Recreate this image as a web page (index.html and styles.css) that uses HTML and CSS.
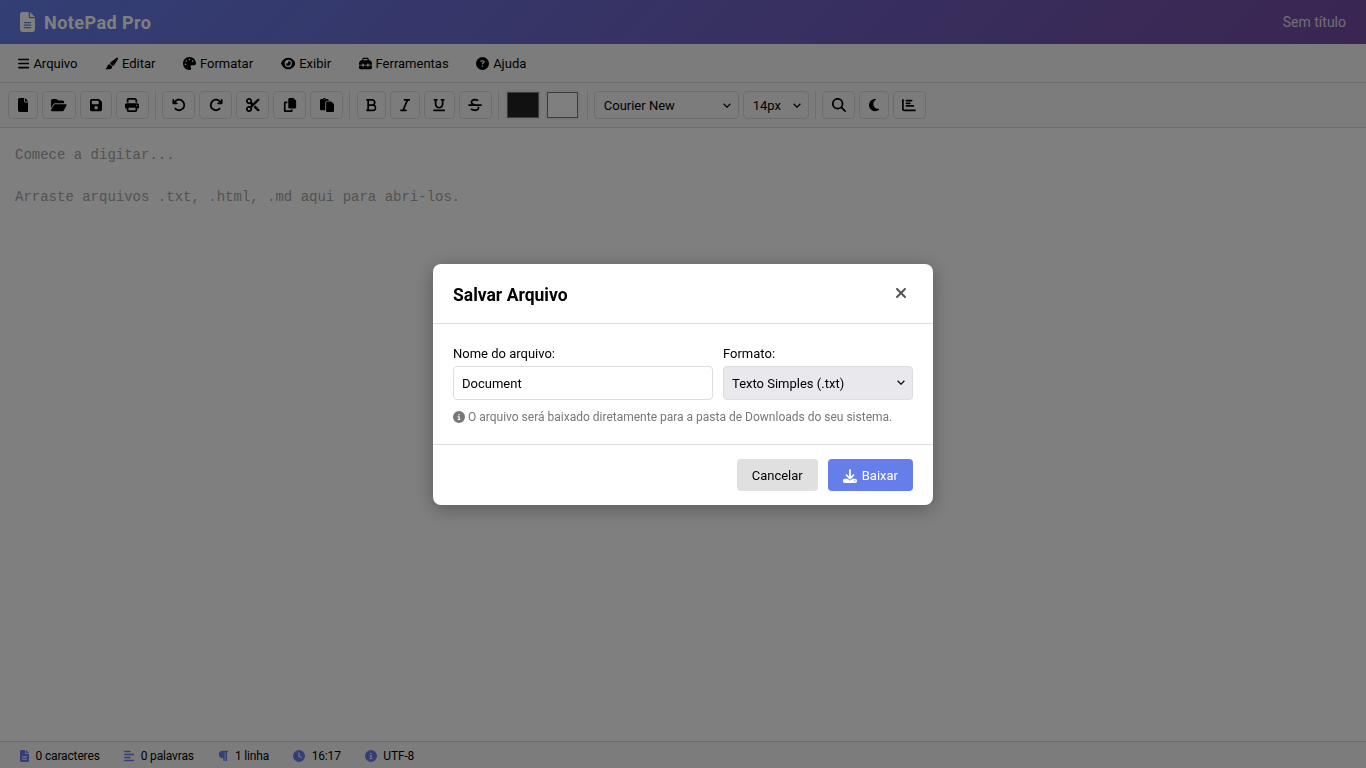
FILE: index.html
```html
<!DOCTYPE html>
<html lang="pt-BR">
<head>
    <meta charset="UTF-8">
    <title>NotePad Pro</title>
    <link rel="stylesheet" href="styles.css">
</head>
<body>
<svg class="sprite" xmlns="http://www.w3.org/2000/svg">
    <symbol id="i-file" viewBox="0 0 384 512"><path d="M0 64C0 28.7 28.7 0 64 0H224V128c0 17.7 14.3 32 32 32H384V448c0 35.3-28.7 64-64 64H64c-35.3 0-64-28.7-64-64V64zm384 64H256V0L384 128z"/></symbol>
    <symbol id="i-file-lines" viewBox="0 0 384 512"><path d="M64 0C28.7 0 0 28.7 0 64V448c0 35.3 28.7 64 64 64H320c35.3 0 64-28.7 64-64V160H256c-17.7 0-32-14.3-32-32V0H64zM256 0V128H384L256 0zM112 256H272c8.8 0 16 7.2 16 16s-7.2 16-16 16H112c-8.8 0-16-7.2-16-16s7.2-16 16-16zm0 64H272c8.8 0 16 7.2 16 16s-7.2 16-16 16H112c-8.8 0-16-7.2-16-16s7.2-16 16-16zm0 64H272c8.8 0 16 7.2 16 16s-7.2 16-16 16H112c-8.8 0-16-7.2-16-16s7.2-16 16-16z"/></symbol>
    <symbol id="i-bars" viewBox="0 0 448 512"><path d="M0 96C0 78.3 14.3 64 32 64H416c17.7 0 32 14.3 32 32s-14.3 32-32 32H32C14.3 128 0 113.7 0 96zM0 256c0-17.7 14.3-32 32-32H416c17.7 0 32 14.3 32 32s-14.3 32-32 32H32c-17.7 0-32-14.3-32-32zM448 416c0 17.7-14.3 32-32 32H32c-17.7 0-32-14.3-32-32s14.3-32 32-32H416c17.7 0 32 14.3 32 32z"/></symbol>
    <symbol id="i-brush" viewBox="0 0 576 512"><path d="M339.3 367.1c27.3-3.9 51.9-19.4 67.2-42.9L568.2 74.1c12.6-19.5 9.4-45.3-7.6-61.2S517.7-4.4 499.1 9.6L262.4 187.2c-24 18-38.2 46.1-38.4 76.1L339.3 367.1zm-19.6 25.4l-116-104.4C143.9 290.3 96 339.6 96 400c0 3.9 .2 7.8 .6 11.6C98.4 429.1 86.4 448 68.8 448H64c-17.7 0-32 14.3-32 32s14.3 32 32 32H208c61.9 0 112-50.1 112-112c0-2.5-.1-5-.2-7.5z"/></symbol>
    <symbol id="i-palette" viewBox="0 0 512 512"><path d="M512 256c0 .9 0 1.8 0 2.7c-.4 36.5-33.6 61.3-70.1 61.3H344c-26.5 0-48 21.5-48 48c0 3.4 .4 6.7 1 9.9c2.1 10.2 6.5 20 10.8 29.9c6.1 13.8 12.1 27.5 12.1 42c0 31.8-21.6 60.7-53.4 62c-3.5 .1-7 .2-10.6 .2C114.6 512 0 397.4 0 256S114.6 0 256 0S512 114.6 512 256zM128 288a32 32 0 1 0 -64 0 32 32 0 1 0 64 0zm0-96a32 32 0 1 0 0-64 32 32 0 1 0 0 64zM288 96a32 32 0 1 0 -64 0 32 32 0 1 0 64 0zm96 96a32 32 0 1 0 0-64 32 32 0 1 0 0 64z"/></symbol>
    <symbol id="i-eye" viewBox="0 0 576 512"><path d="M288 32c-80.8 0-145.5 36.8-192.6 80.6C48.6 156 17.3 208 2.5 243.7c-3.3 7.9-3.3 16.7 0 24.6C17.3 304 48.6 356 95.4 399.4C142.5 443.2 207.2 480 288 480s145.5-36.8 192.6-80.6c46.8-43.5 78.1-95.4 93-131.1c3.3-7.9 3.3-16.7 0-24.6c-14.9-35.7-46.2-87.7-93-131.1C433.5 68.8 368.8 32 288 32zM144 256a144 144 0 1 1 288 0 144 144 0 1 1 -288 0zm144-64c0 35.3-28.7 64-64 64c-7.1 0-13.9-1.2-20.3-3.3c-5.5-1.8-11.9 1.6-11.7 7.4c.3 6.9 1.3 13.8 3.2 20.7c13.7 51.2 66.4 81.6 117.6 67.9s81.6-66.4 67.9-117.6c-11.1-41.5-47.8-69.4-88.6-71.1c-5.8-.2-9.2 6.1-7.4 11.7c2.1 6.4 3.3 13.2 3.3 20.3z"/></symbol>
    <symbol id="i-toolbox" viewBox="0 0 512 512"><path d="M176 88v40H336V88c0-4.4-3.6-8-8-8H184c-4.4 0-8 3.6-8 8zm-48 40V88c0-30.9 25.1-56 56-56H328c30.9 0 56 25.1 56 56v40h28.1c12.7 0 24.9 5.1 33.9 14.1l51.9 51.9c9 9 14.1 21.2 14.1 33.9V304H384V288c0-17.7-14.3-32-32-32s-32 14.3-32 32v16H192V288c0-17.7-14.3-32-32-32s-32 14.3-32 32v16H0V227.9c0-12.7 5.1-24.9 14.1-33.9l51.9-51.9c9-9 21.2-14.1 33.9-14.1H128zM0 416V336H128v16c0 17.7 14.3 32 32 32s32-14.3 32-32V336H320v16c0 17.7 14.3 32 32 32s32-14.3 32-32V336H512v80c0 35.3-28.7 64-64 64H64c-35.3 0-64-28.7-64-64z"/></symbol>
    <symbol id="i-question" viewBox="0 0 512 512"><path d="M256 512A256 256 0 1 0 256 0a256 256 0 1 0 0 512zM169.8 165.3c7.9-22.3 29.1-37.3 52.8-37.3h58.3c34.9 0 63.1 28.3 63.1 63.1c0 22.6-12.1 43.5-31.7 54.8L280 264.4c-.2 13-10.9 23.6-24 23.6c-13.3 0-24-10.7-24-24V250.5c0-8.6 4.6-16.5 12.1-20.8l44.3-25.4c4.7-2.7 7.6-7.7 7.6-13.1c0-8.4-6.8-15.1-15.1-15.1H222.6c-3.4 0-6.4 2.1-7.5 5.3l-.4 1.2c-4.4 12.5-18.2 19-30.6 14.6s-19-18.2-14.6-30.6l.4-1.2zM224 352a32 32 0 1 1 64 0 32 32 0 1 1 -64 0z"/></symbol>
    <symbol id="i-folder" viewBox="0 0 576 512"><path d="M88.7 223.8L0 375.8V96C0 60.7 28.7 32 64 32H181.5c17 0 33.3 6.7 45.3 18.7l26.5 26.5c12 12 28.3 18.7 45.3 18.7H416c35.3 0 64 28.7 64 64v32H144c-22.8 0-43.8 12.1-55.3 31.8zm27.6 16.1C122.1 230 132.6 224 144 224H544c11.5 0 22 6.1 27.7 16.1s5.7 22.2-.1 32.1l-112 192C453.9 474 443.4 480 432 480H32c-11.5 0-22-6.1-27.7-16.1s-5.7-22.2 .1-32.1l112-192z"/></symbol>
    <symbol id="i-save" viewBox="0 0 448 512"><path d="M64 32C28.7 32 0 60.7 0 96V416c0 35.3 28.7 64 64 64H384c35.3 0 64-28.7 64-64V173.3c0-17-6.7-33.3-18.7-45.3L352 50.7C340 38.7 323.7 32 306.7 32H64zm0 96c0-17.7 14.3-32 32-32H288c17.7 0 32 14.3 32 32v64c0 17.7-14.3 32-32 32H96c-17.7 0-32-14.3-32-32V128zM224 288a64 64 0 1 1 0 128 64 64 0 1 1 0-128z"/></symbol>
    <symbol id="i-print" viewBox="0 0 512 512"><path d="M128 0C92.7 0 64 28.7 64 64v96h64V64H354.7L384 93.3V160h64V93.3c0-17-6.7-33.3-18.7-45.3L400 18.7C388 6.7 371.7 0 354.7 0H128zM384 352v32 64H128V384 368 352H384zm64 32h32c17.7 0 32-14.3 32-32V256c0-35.3-28.7-64-64-64H64c-35.3 0-64 28.7-64 64v96c0 17.7 14.3 32 32 32H64v64c0 35.3 28.7 64 64 64H384c35.3 0 64-28.7 64-64V384zM432 248a24 24 0 1 1 0 48 24 24 0 1 1 0-48z"/></symbol>
    <symbol id="i-undo" viewBox="0 0 512 512"><path d="M125.7 160H176c17.7 0 32 14.3 32 32s-14.3 32-32 32H48c-17.7 0-32-14.3-32-32V64c0-17.7 14.3-32 32-32s32 14.3 32 32v51.2L97.6 97.6c87.5-87.5 229.3-87.5 316.8 0s87.5 229.3 0 316.8s-229.3 87.5-316.8 0c-12.5-12.5-12.5-32.8 0-45.3s32.8-12.5 45.3 0c62.5 62.5 163.8 62.5 226.3 0s62.5-163.8 0-226.3s-163.8-62.5-226.3 0L125.7 160z"/></symbol>
    <symbol id="i-redo" viewBox="0 0 512 512"><path d="M386.3 160H336c-17.7 0-32 14.3-32 32s14.3 32 32 32H464c17.7 0 32-14.3 32-32V64c0-17.7-14.3-32-32-32s-32 14.3-32 32v51.2L414.4 97.6c-87.5-87.5-229.3-87.5-316.8 0s-87.5 229.3 0 316.8s229.3 87.5 316.8 0c12.5-12.5 12.5-32.8 0-45.3s-32.8-12.5-45.3 0c-62.5 62.5-163.8 62.5-226.3 0s-62.5-163.8 0-226.3s163.8-62.5 226.3 0L386.3 160z"/></symbol>
    <symbol id="i-cut" viewBox="0 0 512 512"><path d="M256 192l-39.5-39.5c4.9-12.6 7.5-26.2 7.5-40.5C224 50.1 173.9 0 112 0S0 50.1 0 112s50.1 112 112 112c14.3 0 27.9-2.7 40.5-7.5L192 256l-39.5 39.5c-12.6-4.9-26.2-7.5-40.5-7.5C50.1 288 0 338.1 0 400s50.1 112 112 112s112-50.1 112-112c0-14.3-2.7-27.9-7.5-40.5L499.2 76.8c7.1-7.1 7.1-18.5 0-25.6c-28.3-28.3-74.1-28.3-102.4 0L256 192zm22.6 150.6L396.8 460.8c28.3 28.3 74.1 28.3 102.4 0c7.1-7.1 7.1-18.5 0-25.6L342.6 278.6l-64 64zM64 112a48 48 0 1 1 96 0 48 48 0 1 1 -96 0zm48 240a48 48 0 1 1 0 96 48 48 0 1 1 0-96z"/></symbol>
    <symbol id="i-copy" viewBox="0 0 512 512"><path d="M272 0H364.1c12.7 0 24.9 5.1 33.9 14.1l67.9 67.9c9 9 14.1 21.2 14.1 33.9V336c0 26.5-21.5 48-48 48H240c-26.5 0-48-21.5-48-48V48c0-26.5 21.5-48 48-48zM80 128h80v64H96V448H288V416h64v48c0 26.5-21.5 48-48 48H80c-26.5 0-48-21.5-48-48V176c0-26.5 21.5-48 48-48z"/></symbol>
    <symbol id="i-paste" viewBox="0 0 512 512"><path fill-rule="evenodd" d="M160 0c-23.7 0-44.4 12.9-55.4 32H48C21.500 32 0 53.500 0 80V400c0 26.500 21.500 48 48 48H192V176c0-44.200 35.800-80 80-80h48V80c0-26.500-21.500-48-48-48H215.400C204.400 12.900 183.700 0 160 0zM160 48a16 16 0 1 1 0 32 16 16 0 1 1 0-32zM272 128c-26.500 0-48 21.500-48 48V448v16c0 26.500 21.500 48 48 48H464c26.500 0 48-21.500 48-48V243.900c0-12.700-5.100-24.900-14.100-33.900l-67.900-67.900c-9-9-21.200-14.100-33.900-14.100H320 272z"/></symbol>
    <symbol id="i-bold" viewBox="0 0 384 512"><path d="M0 64C0 46.3 14.3 32 32 32H80 96 224c70.7 0 128 57.3 128 128c0 31.3-11.3 60.1-30 82.3c37.1 22.4 62 63.1 62 109.7c0 70.7-57.3 128-128 128H96 80 32c-17.7 0-32-14.3-32-32s14.3-32 32-32H48V256 96H32C14.3 96 0 81.7 0 64zM224 224c35.3 0 64-28.7 64-64s-28.7-64-64-64H112V224H224zM112 288V416H256c35.3 0 64-28.7 64-64s-28.7-64-64-64H224 112z"/></symbol>
    <symbol id="i-italic" viewBox="0 0 384 512"><path d="M128 64c0-17.7 14.3-32 32-32H352c17.7 0 32 14.3 32 32s-14.3 32-32 32H293.3L160 416h64c17.7 0 32 14.3 32 32s-14.3 32-32 32H32c-17.7 0-32-14.3-32-32s14.3-32 32-32H90.7L224 96H160c-17.7 0-32-14.3-32-32z"/></symbol>
    <symbol id="i-underline" viewBox="0 0 448 512"><path d="M16 64c0-17.7 14.3-32 32-32h96c17.7 0 32 14.3 32 32s-14.3 32-32 32H128V224c0 53 43 96 96 96s96-43 96-96V96H304c-17.7 0-32-14.3-32-32s14.3-32 32-32h96c17.7 0 32 14.3 32 32s-14.3 32-32 32H384V224c0 88.4-71.6 160-160 160s-160-71.6-160-160V96H48C30.3 96 16 81.7 16 64zM0 448c0-17.7 14.3-32 32-32H416c17.7 0 32 14.3 32 32s-14.3 32-32 32H32c-17.7 0-32-14.3-32-32z"/></symbol>
    <symbol id="i-strike" viewBox="0 0 512 512"><path d="M161.3 144c3.2-17.2 14-30.1 33.7-38.6c21.1-9 51.8-12.3 88.6-6.5c11.9 1.9 48.8 9.1 60.1 12c17.1 4.5 34.6-5.6 39.2-22.7s-5.6-34.6-22.7-39.2c-14.3-3.8-53.6-11.4-66.6-13.4c-44.7-7-88.3-4.2-123.7 10.9c-36.5 15.6-64.4 44.8-71.8 87.3c-.1 .6-.2 1.1-.2 1.7c-2.8 23.9 .5 45.6 10.1 64.6c4.5 9 10.2 16.9 16.7 23.9H32c-17.7 0-32 14.3-32 32s14.3 32 32 32H480c17.7 0 32-14.3 32-32s-14.3-32-32-32H270.1c-.1 0-.3-.1-.4-.1l-1.1-.3c-36-10.8-65.2-19.6-85.2-33.1c-9.3-6.3-15-12.6-18.2-19.1c-3.1-6.1-5.2-14.6-3.8-27.4zM348.9 337.2c2.7 6.5 4.4 15.8 1.9 30.1c-3 17.6-13.8 30.8-33.9 39.4c-21.1 9-51.7 12.3-88.5 6.5c-18-2.9-49.1-13.5-74.4-22.1c-5.6-1.9-11-3.7-15.9-5.4c-16.8-5.6-34.9 3.5-40.5 20.3s3.5 34.9 20.3 40.5c3.6 1.2 7.9 2.7 12.7 4.3c24.9 8.5 63.6 21.7 87.6 25.6l.2 0c44.7 7 88.3 4.2 123.7-10.9c36.5-15.6 64.4-44.8 71.8-87.3c3.6-21 2.7-40.4-3.1-58.1H335.1c7 5.6 11.4 11.2 13.9 17.2z"/></symbol>
    <symbol id="i-search" viewBox="0 0 512 512"><path d="M416 208c0 45.9-14.9 88.3-40 122.7L502.6 457.4c12.5 12.5 12.5 32.8 0 45.3s-32.8 12.5-45.3 0L330.7 376c-34.4 25.2-76.8 40-122.7 40C93.1 416 0 322.9 0 208S93.1 0 208 0S416 93.1 416 208zM208 352a144 144 0 1 0 0-288 144 144 0 1 0 0 288z"/></symbol>
    <symbol id="i-moon" viewBox="0 0 384 512"><path d="M223.500 32C100 32 0 132.300 0 256S100 480 223.500 480c60.600 0 115.500-24.200 155.800-63.400c5-4.900 6.300-12.500 3.100-18.700s-10.100-9.700-17-8.500c-9.800 1.700-19.800 2.600-30.100 2.600c-96.900 0-175.500-78.800-175.500-176c0-65.800 36-123.100 89.300-153.300c6.100-3.500 9.200-10.500 7.700-17.300s-7.300-11.900-14.300-12.500c-6.300-.5-12.600-.8-19-.8z"/></symbol>
    <symbol id="i-chart" viewBox="0 0 512 512"><path d="M32 32c17.700 0 32 14.300 32 32V400c0 8.800 7.200 16 16 16H480c17.700 0 32 14.300 32 32s-14.300 32-32 32H80c-44.200 0-80-35.800-80-80V64C0 46.300 14.300 32 32 32zm96 64c0-17.700 14.300-32 32-32l192 0c17.700 0 32 14.300 32 32s-14.300 32-32 32l-192 0c-17.700 0-32-14.300-32-32zm32 64l128 0c17.700 0 32 14.300 32 32s-14.300 32-32 32l-128 0c-17.700 0-32-14.300-32-32s14.300-32 32-32zm0 96H416c17.700 0 32 14.300 32 32s-14.300 32-32 32H160c-17.700 0-32-14.300-32-32s14.300-32 32-32z"/></symbol>
    <symbol id="i-info" viewBox="0 0 512 512"><path d="M256 512A256 256 0 1 0 256 0a256 256 0 1 0 0 512zM216 336h24V272H216c-13.300 0-24-10.700-24-24s10.700-24 24-24h48c13.300 0 24 10.700 24 24v88h8c13.300 0 24 10.700 24 24s-10.700 24-24 24H216c-13.300 0-24-10.700-24-24s10.700-24 24-24zm40-208a32 32 0 1 1 0 64 32 32 0 1 1 0-64z"/></symbol>
    <symbol id="i-clock" viewBox="0 0 512 512"><path d="M256 0a256 256 0 1 1 0 512A256 256 0 1 1 256 0zM232 120V256c0 8 4 15.500 10.700 20l96 64c11 7.400 25.900 4.400 33.300-6.700s4.400-25.900-6.700-33.300L280 243.200V120c0-13.300-10.700-24-24-24s-24 10.700-24 24z"/></symbol>
    <symbol id="i-paragraph" viewBox="0 0 448 512"><path d="M192 32h64H416c17.700 0 32 14.300 32 32s-14.300 32-32 32H384l0 352c0 17.700-14.300 32-32 32s-32-14.300-32-32l0-352H288l0 352c0 17.700-14.300 32-32 32s-32-14.300-32-32l0-96H192c-88.400 0-160-71.600-160-160s71.600-160 160-160z"/></symbol>
    <symbol id="i-align" viewBox="0 0 448 512"><path d="M288 64c0 17.700-14.300 32-32 32H32C14.300 96 0 81.700 0 64S14.300 32 32 32H256c17.700 0 32 14.300 32 32zm0 256c0 17.700-14.300 32-32 32H32c-17.700 0-32-14.300-32-32s14.300-32 32-32H256c17.700 0 32 14.300 32 32zM0 192c0-17.700 14.300-32 32-32H416c17.700 0 32 14.300 32 32s-14.300 32-32 32H32c-17.700 0-32-14.300-32-32zM448 448c0 17.700-14.300 32-32 32H32c-17.700 0-32-14.300-32-32s14.300-32 32-32H416c17.700 0 32 14.300 32 32z"/></symbol>
    <symbol id="i-close" viewBox="0 0 384 512"><path d="M342.600 150.600c12.500-12.500 12.500-32.800 0-45.300s-32.800-12.500-45.300 0L192 210.700 86.600 105.400c-12.500-12.500-32.800-12.500-45.300 0s-12.500 32.800 0 45.300L146.700 256 41.400 361.400c-12.500 12.500-12.500 32.800 0 45.300s32.800 12.500 45.300 0L192 301.300 297.400 406.600c12.500 12.500 32.800 12.500 45.300 0s12.500-32.800 0-45.300L237.300 256 342.600 150.600z"/></symbol>
    <symbol id="i-download" viewBox="0 0 512 512"><path d="M288 32c0-17.700-14.300-32-32-32s-32 14.300-32 32V274.700l-73.400-73.400c-12.500-12.500-32.800-12.500-45.300 0s-12.500 32.800 0 45.300l128 128c12.500 12.500 32.800 12.500 45.300 0l128-128c12.500-12.500 12.500-32.800 0-45.300s-32.800-12.500-45.300 0L288 274.700V32zM64 352c-35.300 0-64 28.700-64 64v32c0 35.300 28.700 64 64 64H448c35.300 0 64-28.700 64-64V416c0-35.300-28.700-64-64-64H346.500l-45.300 45.300c-25 25-65.500 25-90.500 0L165.500 352H64zm368 56a24 24 0 1 1 0 48 24 24 0 1 1 0-48z"/></symbol>
</svg>

<div class="app">
    <header class="title-bar">
        <div class="logo">
            <svg class="ico logo-ico"><use href="#i-file-lines"/></svg>
            <span>NotePad Pro</span>
        </div>
        <span class="doc-name">Sem título</span>
    </header>

    <nav class="menu-bar">
        <span class="menu-item"><svg class="ico w-448"><use href="#i-bars"/></svg>Arquivo</span>
        <span class="menu-item"><svg class="ico w-512"><use href="#i-brush"/></svg>Editar</span>
        <span class="menu-item"><svg class="ico w-512"><use href="#i-palette"/></svg>Formatar</span>
        <span class="menu-item"><svg class="ico w-576"><use href="#i-eye"/></svg>Exibir</span>
        <span class="menu-item"><svg class="ico w-512"><use href="#i-toolbox"/></svg>Ferramentas</span>
        <span class="menu-item"><svg class="ico w-512"><use href="#i-question"/></svg>Ajuda</span>
    </nav>

    <div class="toolbar">
        <button class="tool"><svg class="ico w-384"><use href="#i-file"/></svg></button>
        <button class="tool"><svg class="ico w-576"><use href="#i-folder"/></svg></button>
        <button class="tool"><svg class="ico w-448"><use href="#i-save"/></svg></button>
        <button class="tool"><svg class="ico w-512"><use href="#i-print"/></svg></button>
        <span class="sep"></span>
        <button class="tool"><svg class="ico w-512"><use href="#i-undo"/></svg></button>
        <button class="tool"><svg class="ico w-512"><use href="#i-redo"/></svg></button>
        <button class="tool"><svg class="ico w-512"><use href="#i-cut"/></svg></button>
        <button class="tool"><svg class="ico w-512"><use href="#i-copy"/></svg></button>
        <button class="tool"><svg class="ico w-512"><use href="#i-paste"/></svg></button>
        <span class="sep"></span>
        <button class="tool"><svg class="ico w-384"><use href="#i-bold"/></svg></button>
        <button class="tool"><svg class="ico w-384"><use href="#i-italic"/></svg></button>
        <button class="tool"><svg class="ico w-448"><use href="#i-underline"/></svg></button>
        <button class="tool"><svg class="ico w-512"><use href="#i-strike"/></svg></button>
        <span class="sep"></span>
        <input class="swatch" type="color" value="#222222">
        <input class="swatch" type="color" value="#ffffff">
        <span class="sep"></span>
        <select class="tool-select font-select"><option>Courier New</option></select>
        <select class="tool-select size-select"><option>14px</option></select>
        <span class="sep"></span>
        <button class="tool"><svg class="ico w-512"><use href="#i-search"/></svg></button>
        <button class="tool"><svg class="ico w-384"><use href="#i-moon"/></svg></button>
        <button class="tool"><svg class="ico w-512"><use href="#i-chart"/></svg></button>
    </div>

    <main class="editor">
        <p>Comece a digitar...</p>
        <p>&nbsp;</p>
        <p>Arraste arquivos .txt, .html, .md aqui para abri-los.</p>
    </main>

    <footer class="status-bar">
        <span class="stat"><svg class="ico w-384"><use href="#i-file-lines"/></svg>0 caracteres</span>
        <span class="stat"><svg class="ico w-448"><use href="#i-align"/></svg>0 palavras</span>
        <span class="stat"><svg class="ico w-448"><use href="#i-paragraph"/></svg>1 linha</span>
        <span class="stat"><svg class="ico w-512"><use href="#i-clock"/></svg>16:17</span>
        <span class="stat"><svg class="ico w-512"><use href="#i-info"/></svg>UTF-8</span>
    </footer>
</div>

<div class="overlay">
    <div class="modal">
        <div class="modal-head">
            <h2>Salvar Arquivo</h2>
            <svg class="ico close-ico"><use href="#i-close"/></svg>
        </div>
        <div class="modal-body">
            <div class="field-row">
                <label class="field name-field">
                    <span>Nome do arquivo:</span>
                    <input type="text" value="Document">
                </label>
                <label class="field type-field">
                    <span>Formato:</span>
                    <select><option>Texto Simples (.txt)</option></select>
                </label>
            </div>
            <p class="hint"><svg class="ico hint-ico"><use href="#i-info"/></svg>O arquivo será baixado diretamente para a pasta de Downloads do seu sistema.</p>
        </div>
        <div class="modal-foot">
            <button class="btn btn-cancel">Cancelar</button>
            <button class="btn btn-primary"><svg class="ico w-512"><use href="#i-download"/></svg>Baixar</button>
        </div>
    </div>
</div>
</body>
</html>
```

FILE: styles.css
```css
* {
    box-sizing: border-box;
    margin: 0;
    padding: 0;
}

html, body {
    height: 100%;
    overflow: hidden;
}

body {
    font-family: Roboto, "Liberation Sans", sans-serif;
    font-size: 13px;
    color: #000;
}

.sprite {
    display: none;
}

.ico {
    display: block;
    height: 14px;
    fill: currentColor;
    flex-shrink: 0;
}

.w-384 { width: 10.5px; }
.w-448 { width: 12.25px; }
.w-512 { width: 14px; }
.w-576 { width: 15.75px; }

.app {
    display: flex;
    flex-direction: column;
    height: 100vh;
    background: #fff;
}

.title-bar {
    display: flex;
    align-items: center;
    justify-content: space-between;
    height: 44px;
    padding: 0 20px;
    background: linear-gradient(135deg, #667eea 0%, #764ba2 100%);
    color: #fff;
}

.logo {
    display: flex;
    align-items: center;
    gap: 9px;
    font-size: 18px;
    font-weight: 700;
    letter-spacing: .45px;
}

.logo-ico {
    width: 15px;
    height: 20px;
}

.doc-name {
    font-size: 14px;
    opacity: .8;
}

.menu-bar {
    display: flex;
    gap: 7.5px;
    height: 39px;
    padding: 0 8px;
    align-items: center;
    background: #f8f9fa;
    border-bottom: 1px solid #ddd;
}

.menu-item {
    display: flex;
    align-items: center;
    gap: 4px;
    padding: 6px 10px;
}

.menu-item .ico { height: 13px; }
.menu-item .w-448 { width: 11.4px; }
.menu-item .w-512 { width: 13px; }
.menu-item .w-576 { width: 14.6px; }

.toolbar {
    display: flex;
    align-items: center;
    gap: 4px;
    height: 45px;
    padding: 0 8px;
    background: #f8f9fa;
    border-bottom: 1px solid #ddd;
}

.tool {
    display: flex;
    align-items: center;
    justify-content: center;
    height: 28px;
    padding: 0 8.5px;
    background: #f8f9fa;
    border: 1px solid #ddd;
    border-radius: 4px;
    color: #000;
}

.sep {
    width: 1px;
    height: 28px;
    margin: 0 2.25px;
    background: #ddd;
}

.swatch {
    width: 35.5px;
    height: 30px;
    padding: 2px;
    border: none;
    border-radius: 3px;
    background: #efefef;
}

.swatch::-webkit-color-swatch-wrapper {
    padding: 0;
}

.swatch::-webkit-color-swatch {
    border: 1px solid #767676;
}

.tool-select,
.field select {
    appearance: none;
    background-image: url("data:image/svg+xml,%3Csvg xmlns='http://www.w3.org/2000/svg' viewBox='0 0 8 5'%3E%3Cpath d='M.6.8 4 4.2 7.400.8' fill='none' stroke='%23111' stroke-width='1.300'/%3E%3C/svg%3E");
    background-repeat: no-repeat;
    background-position: right 7px center;
    background-size: 8px 5px;
}

.tool-select {
    height: 28px;
    padding: 0 9px;
    font-family: inherit;
    font-size: 13px;
    background-color: #f8f9fa;
    border: 1px solid #ddd;
    border-radius: 4px;
}

.font-select { width: 145px; }
.size-select { width: 66px; }

.editor {
    flex: 1;
    padding: 17px 15px;
    font-family: "Liberation Mono", "Courier New", monospace;
    font-size: 14px;
    line-height: 21px;
    color: #a6a6a6;
}

.status-bar {
    display: flex;
    align-items: center;
    gap: 24px;
    height: 27px;
    padding: 1px 20px 0;
    font-size: 12px;
    letter-spacing: -.15px;
    background: #f8f9fa;
    border-top: 1px solid #ddd;
}

.stat {
    display: flex;
    align-items: center;
    gap: 6.5px;
}

.stat .ico {
    height: 12px;
    color: #667eea;
}

.stat .w-384 { width: 9px; }
.stat .w-448 { width: 10.5px; }
.stat .w-512 { width: 12px; }

.overlay {
    position: fixed;
    inset: 0;
    display: flex;
    align-items: center;
    justify-content: center;
    background: rgba(0, 0, 0, .5);
}

.modal {
    width: 500px;
    background: #fff;
    border-radius: 8px;
    box-shadow: 0 4px 20px rgba(0, 0, 0, .3);
}

.modal-head {
    display: flex;
    align-items: center;
    justify-content: space-between;
    height: 60px;
    padding: 0 20px;
    border-bottom: 1px solid #ddd;
}

.modal-head h2 {
    padding-top: 3px;
    font-size: 17.5px;
    font-weight: 700;
}

.close-ico {
    width: 12px;
    height: 16px;
    margin-right: 6px;
    color: #555;
}

.modal-body {
    height: 121px;
    padding: 20px;
    border-bottom: 1px solid #ddd;
}

.field-row {
    display: flex;
    gap: 10px;
}

.field {
    display: flex;
    flex-direction: column;
    gap: 2px;
    line-height: 20px;
}

.name-field { flex: 1; }
.type-field { width: 190px; }

.field input,
.field select {
    height: 34px;
    padding: 2px 8px 0;
    font-family: inherit;
    font-size: 13px;
    border: 1px solid #ddd;
    border-radius: 4px;
}

.field select {
    background-color: #e9e9ed;
}

.hint {
    display: flex;
    align-items: center;
    gap: 3px;
    margin-top: 9px;
    font-size: 12px;
    line-height: 16px;
    white-space: nowrap;
    color: #777;
}

.hint-ico {
    width: 12px;
    height: 12px;
}

.modal-foot {
    display: flex;
    justify-content: flex-end;
    gap: 10px;
    padding: 14px 20px;
}

.btn {
    display: flex;
    align-items: center;
    gap: 5px;
    height: 32px;
    padding: 2px 15px 0;
    font-family: inherit;
    font-size: 13px;
    border: none;
    border-radius: 4px;
}

.btn-cancel {
    background: #e0e0e0;
    color: #000;
}

.btn-primary {
    background: #667eea;
    color: #fff;
}
```
